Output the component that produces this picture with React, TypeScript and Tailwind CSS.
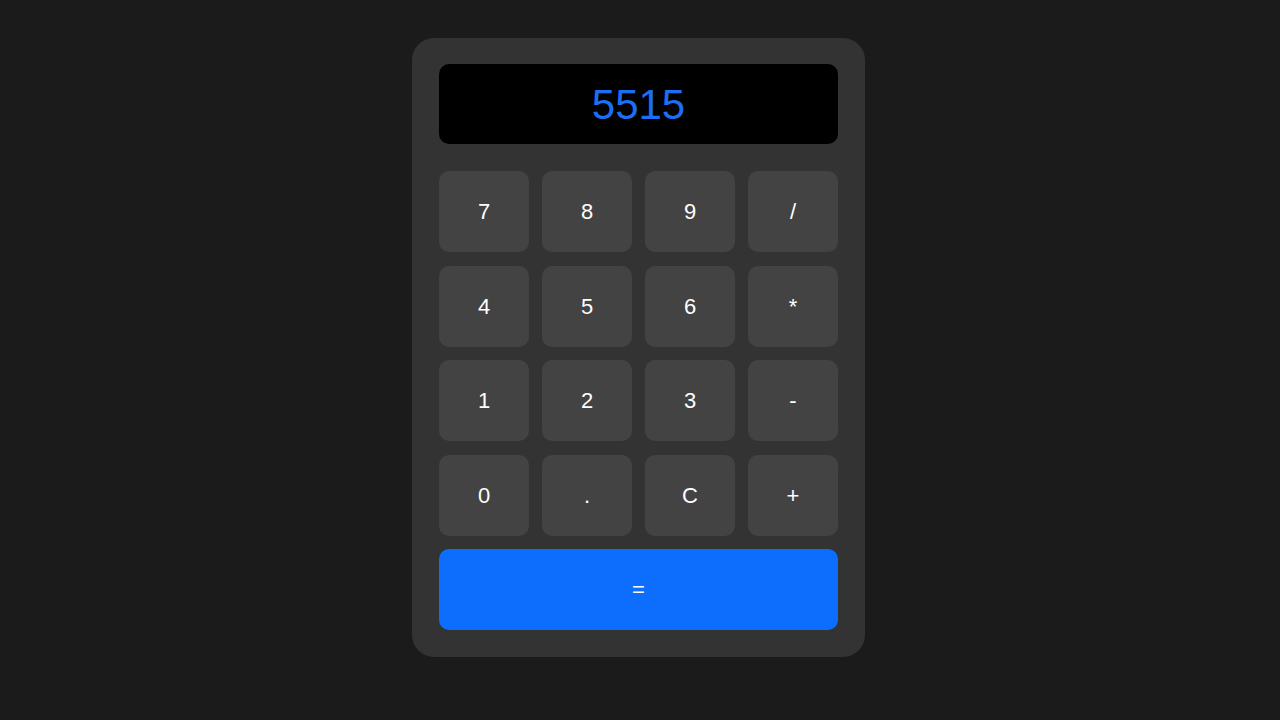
import React, { useState } from 'react';

const KEYS = ['7', '8', '9', '/', '4', '5', '6', '*', '1', '2', '3', '-', '0', '.', 'C', '+'];

export default function App() {
    const [display, setDisplay] = useState<string>('5515');

    const handleKey = (key: string) => {
        if (key === 'C') {
            setDisplay('');
            return;
        }
        setDisplay(prev => prev + key);
    };

    const handleEquals = () => {
        try {
            // eslint-disable-next-line no-new-func
            const result = Function(`return (${display})`)();
            setDisplay(String(result));
        } catch (e) {
            setDisplay('Error');
        }
    };

    return (
        <div className="min-h-screen bg-[#1b1b1b] flex justify-center pt-[38px] pr-[3px] font-['Liberation_Sans',Arial,sans-serif]">
            <div className="w-[453px] h-[619px] bg-[#333333] rounded-[22px] px-[27px] pt-[26px] flex flex-col">
                <div className="h-[80px] bg-black rounded-[10px] flex items-center justify-center text-[42px] text-[#1a6ff5]">
                    {display}
                </div>

                <div className="grid grid-cols-4 gap-x-[13px] gap-y-[13.5px] mt-[27px]">
                    {KEYS.map(key => (
                        <button
                            key={key}
                            onClick={() => handleKey(key)}
                            className="h-[81px] bg-[#434343] rounded-[10px] text-white text-[22px] flex items-center justify-center"
                        >
                            {key}
                        </button>
                    ))}
                    <button
                        onClick={handleEquals}
                        className="col-span-4 h-[81px] bg-[#0d6efd] rounded-[10px] text-white text-[22px] flex items-center justify-center"
                    >
                        =
                    </button>
                </div>
            </div>
        </div>
    );
}
